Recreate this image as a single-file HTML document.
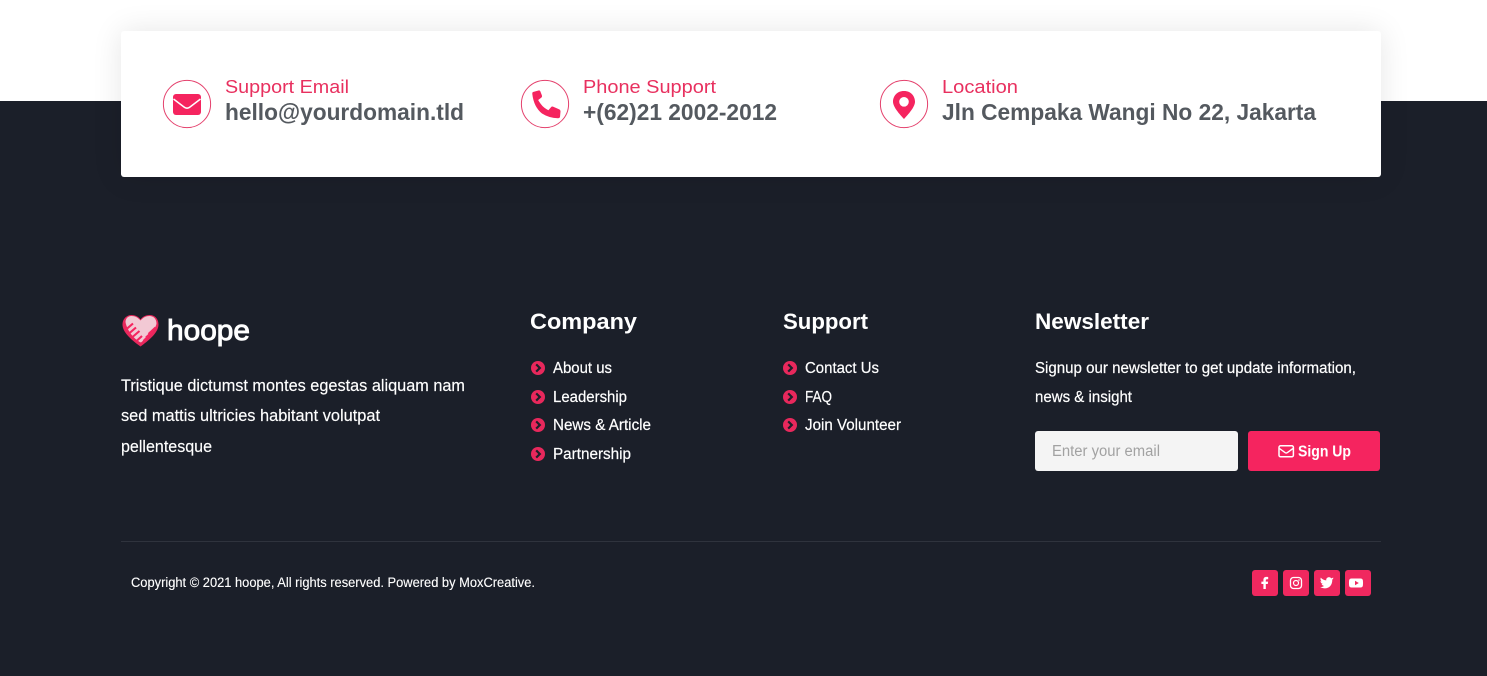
<!DOCTYPE html>
<html lang="en">
<head>
<meta charset="utf-8">
<title>hoope footer</title>
<style>
html,body{margin:0;padding:0;width:1487px;height:676px;overflow:hidden;background:#fff}
.dark{position:absolute;left:0;top:101px;width:1487px;height:575px;background:#1b1f29}
.card{position:absolute;left:121px;top:31px;width:1260px;height:146px;background:#fff;border-radius:3px;box-shadow:0 0 30px rgba(0,0,0,.1)}
svg{position:absolute;left:0;top:0}
text{font-family:"Liberation Sans",sans-serif;white-space:pre}
.lab{font-size:18.5px;fill:#e8305f}
.val{font-size:23px;fill:#54595f;font-weight:700}
.h{font-size:22.5px;fill:#fff;font-weight:700}
.l{font-size:15.5px;fill:#fff;stroke:#fff;stroke-width:.2px}
.p{font-size:16.5px;fill:#fff;stroke:#fff;stroke-width:.15px}
</style>
</head>
<body>
<div class="dark"></div>
<div class="card"></div>
<svg width="1487" height="676" viewBox="0 0 1487 676" xmlns="http://www.w3.org/2000/svg">
  <defs>
    <g id="chev">
      <circle r="7" fill="#e8285c"/>
      <path d="M-1.8-3.6 1.8 0-1.8 3.6" fill="none" stroke="#1b1f29" stroke-width="2.2"/>
    </g>
  </defs>

  <!-- info card -->
  <circle cx="187" cy="104" r="23.6" fill="#fff" stroke="#e4406c" stroke-width="1"/>
  <rect x="173" y="94" width="28" height="21" rx="3" fill="#f5245f"/>
  <path d="M173.5 99 184 107Q187 109.4 190 107L200.5 99" fill="none" stroke="#fff" stroke-width="1.5"/>
  <text class="lab" x="225" y="93" textLength="124" lengthAdjust="spacingAndGlyphs">Support Email</text>
  <text class="val" x="225" y="120" textLength="239" lengthAdjust="spacingAndGlyphs">hello@yourdomain.tld</text>

  <circle cx="545" cy="104" r="23.6" fill="#fff" stroke="#e4406c" stroke-width="1"/>
  <path d="M538.5 90.5 533 92Q532 92.5 532.3 94 533.8 107 542 113.5 549 118 558 118.3 559.5 118.3 560 117L560.5 111.5Q560.5 110 559 109.3L553 106.6Q551.8 106.2 551 107.2L548.4 110.2Q543.5 107.8 540.8 104 538.6 101 538.2 100L541.5 97.5Q542.4 96.6 541.9 95.4L540.3 91.3Q539.8 90.2 538.5 90.5Z" fill="#f5245f"/>
  <text class="lab" x="583" y="93" textLength="133" lengthAdjust="spacingAndGlyphs">Phone Support</text>
  <text class="val" x="583" y="120" textLength="194" lengthAdjust="spacingAndGlyphs">+(62)21 2002-2012</text>

  <circle cx="904" cy="104" r="23.6" fill="#fff" stroke="#e4406c" stroke-width="1"/>
  <path fill-rule="evenodd" d="M904 91C896.8 91 893 96.4 893 101.8 893 107 899.8 114.6 904 119 908.2 114.6 915 107 915 101.8 915 96.4 911.2 91 904 91ZM904 97A4.8 4.8 0 1 1 904 106.6 4.8 4.8 0 1 1 904 97Z" fill="#f5245f"/>
  <text class="lab" x="942" y="93" textLength="76" lengthAdjust="spacingAndGlyphs">Location</text>
  <text class="val" x="942" y="120" textLength="374" lengthAdjust="spacingAndGlyphs">Jln Cempaka Wangi No 22, Jakarta</text>

  <!-- logo -->
  <path d="M140.5 346.5C133 341 122.5 333 122.5 324.5 122.5 318.5 127 315 131.5 315 135.5 315 138.5 316.8 140.5 319.5 142.5 316.8 145.5 315 149.5 315 154.5 315 158.5 318.5 158.5 324.5 158.5 333 148 341 140.5 346.5Z" fill="#e8285c"/>
  <path d="M125.5 322C125.5 318.5 128 316 131.5 316 135 316 138 317.6 140.5 320.5 143 317.6 146 316 149.5 316 153 316 156.5 318.5 156.5 323.5 156 328 150 335 141 342.5 135 340 127 331 125.5 322Z" fill="#f2c9d4"/>
  <path d="M126 329.5 133 323.5M129 333.5 136 327.5M132.5 337 139.5 331M136.5 341 142 336M155.5 327.5 148.5 334M152 332 146 337.5M148 336.5 143.5 341" fill="none" stroke="#f5245f" stroke-width="2.1"/>
  <text x="167" y="340" font-size="29" fill="#fff" stroke="#fff" stroke-width=".9" textLength="83" lengthAdjust="spacingAndGlyphs">hoope</text>

  <!-- about -->
  <text class="p" x="121" y="391" textLength="344" lengthAdjust="spacingAndGlyphs">Tristique dictumst montes egestas aliquam nam</text>
  <text class="p" x="121" y="421" textLength="259" lengthAdjust="spacingAndGlyphs">sed mattis ultricies habitant volutpat</text>
  <text class="p" x="121" y="452" textLength="91" lengthAdjust="spacingAndGlyphs">pellentesque</text>

  <!-- headings -->
  <text class="h" x="530" y="329" textLength="107" lengthAdjust="spacingAndGlyphs">Company</text>
  <text class="h" x="783" y="329" textLength="85" lengthAdjust="spacingAndGlyphs">Support</text>
  <text class="h" x="1035" y="329" textLength="114" lengthAdjust="spacingAndGlyphs">Newsletter</text>

  <!-- company links -->
  <use href="#chev" x="538" y="368"/>
  <use href="#chev" x="538" y="397"/>
  <use href="#chev" x="538" y="425"/>
  <use href="#chev" x="538" y="454"/>
  <text class="l" x="553" y="373" textLength="59" lengthAdjust="spacingAndGlyphs">About us</text>
  <text class="l" x="553" y="402" textLength="74" lengthAdjust="spacingAndGlyphs">Leadership</text>
  <text class="l" x="553" y="430" textLength="98" lengthAdjust="spacingAndGlyphs">News &amp; Article</text>
  <text class="l" x="553" y="459" textLength="78" lengthAdjust="spacingAndGlyphs">Partnership</text>

  <!-- support links -->
  <use href="#chev" x="790" y="368"/>
  <use href="#chev" x="790" y="397"/>
  <use href="#chev" x="790" y="425"/>
  <text class="l" x="805" y="373" textLength="74" lengthAdjust="spacingAndGlyphs">Contact Us</text>
  <text class="l" x="805" y="402" textLength="27" lengthAdjust="spacingAndGlyphs">FAQ</text>
  <text class="l" x="805" y="430" textLength="96" lengthAdjust="spacingAndGlyphs">Join Volunteer</text>

  <!-- newsletter -->
  <text class="l" x="1035" y="373" textLength="321" lengthAdjust="spacingAndGlyphs">Signup our newsletter to get update information,</text>
  <text class="l" x="1035" y="402" textLength="97" lengthAdjust="spacingAndGlyphs">news &amp; insight</text>
  <rect x="1035" y="431" width="203" height="40" rx="3" fill="#f4f4f4"/>
  <text x="1052" y="456" font-size="15.5" fill="#a2a2a2" textLength="108" lengthAdjust="spacingAndGlyphs">Enter your email</text>
  <rect x="1248" y="431" width="132" height="40" rx="3" fill="#f5245f"/>
  <rect x="1279" y="445.8" width="14.4" height="11" rx="1.6" fill="none" stroke="#fff" stroke-width="1.5"/>
  <path d="M1279.5 448.5 1285 452.6Q1286.2 453.4 1287.4 452.6L1293 448.5" fill="none" stroke="#fff" stroke-width="1.4"/>
  <text x="1298" y="456.5" font-size="16" font-weight="700" fill="#fff" textLength="53" lengthAdjust="spacingAndGlyphs">Sign Up</text>

  <!-- bottom -->
  <rect x="121" y="541" width="1260" height="1" fill="#2f333d"/>
  <text x="131" y="587" font-size="13.5" fill="#fff" stroke="#fff" stroke-width=".12" textLength="404" lengthAdjust="spacingAndGlyphs">Copyright © 2021 hoope, All rights reserved. Powered by MoxCreative.</text>

  <!-- social -->
  <rect x="1252" y="570" width="26" height="26" rx="3" fill="#f0285f"/>
  <rect x="1283" y="570" width="26" height="26" rx="3" fill="#f0285f"/>
  <rect x="1314" y="570" width="26" height="26" rx="3" fill="#f0285f"/>
  <rect x="1345" y="570" width="26" height="26" rx="3" fill="#f0285f"/>
  <path d="M1263.4 589V584H1261.4V581.6H1263.4V580C1263.4 577.9 1264.6 576.9 1266.4 576.9 1267.2 576.9 1268 577 1268.2 577V579.2H1267C1266 579.2 1265.8 579.7 1265.8 580.4V581.6H1268.1L1267.8 584H1265.8V589Z" fill="#fff"/>
  <rect x="1290.5" y="577.5" width="11" height="11" rx="3" fill="none" stroke="#fff" stroke-width="1.3"/>
  <circle cx="1296" cy="583" r="2.5" fill="none" stroke="#fff" stroke-width="1.2"/>
  <circle cx="1299" cy="580" r=".8" fill="#fff"/>
  <g transform="translate(1327 583) scale(.88) translate(-1327 -584)">
    <path d="M1333.5 579.6C1333 579.9 1332.3 580.1 1331.8 580.2 1331 579.3 1329.9 578.8 1328.8 578.9 1327 579.1 1325.8 580.7 1326.2 582.5 1323.6 582.4 1321.4 581.2 1320 579.4 1319.2 580.8 1319.6 582.6 1321 583.6 1320.5 583.6 1320 583.4 1319.6 583.2 1319.6 584.8 1320.7 586.1 1322.2 586.4 1321.7 586.6 1321.2 586.6 1320.8 586.5 1321.2 587.8 1322.4 588.7 1323.8 588.8 1322.4 589.8 1320.8 590.3 1319.2 590.1 1325.8 593.9 1333.2 590.4 1333 581.7 1333.5 581.2 1334 580.4 1334.4 579.7Z" transform="translate(0 -1.5)" fill="#fff"/>
  </g>
  <path fill-rule="evenodd" d="M1351.5 578.5H1360.5Q1362.6 578.5 1362.9 580.5 1363.2 583 1362.9 585.5 1362.6 587.5 1360.5 587.5H1351.5Q1349.4 587.5 1349.1 585.5 1348.8 583 1349.1 580.5 1349.4 578.5 1351.5 578.5ZM1355 580.8V585.2L1358.8 583Z" fill="#fff"/>
</svg>
</body>
</html>
